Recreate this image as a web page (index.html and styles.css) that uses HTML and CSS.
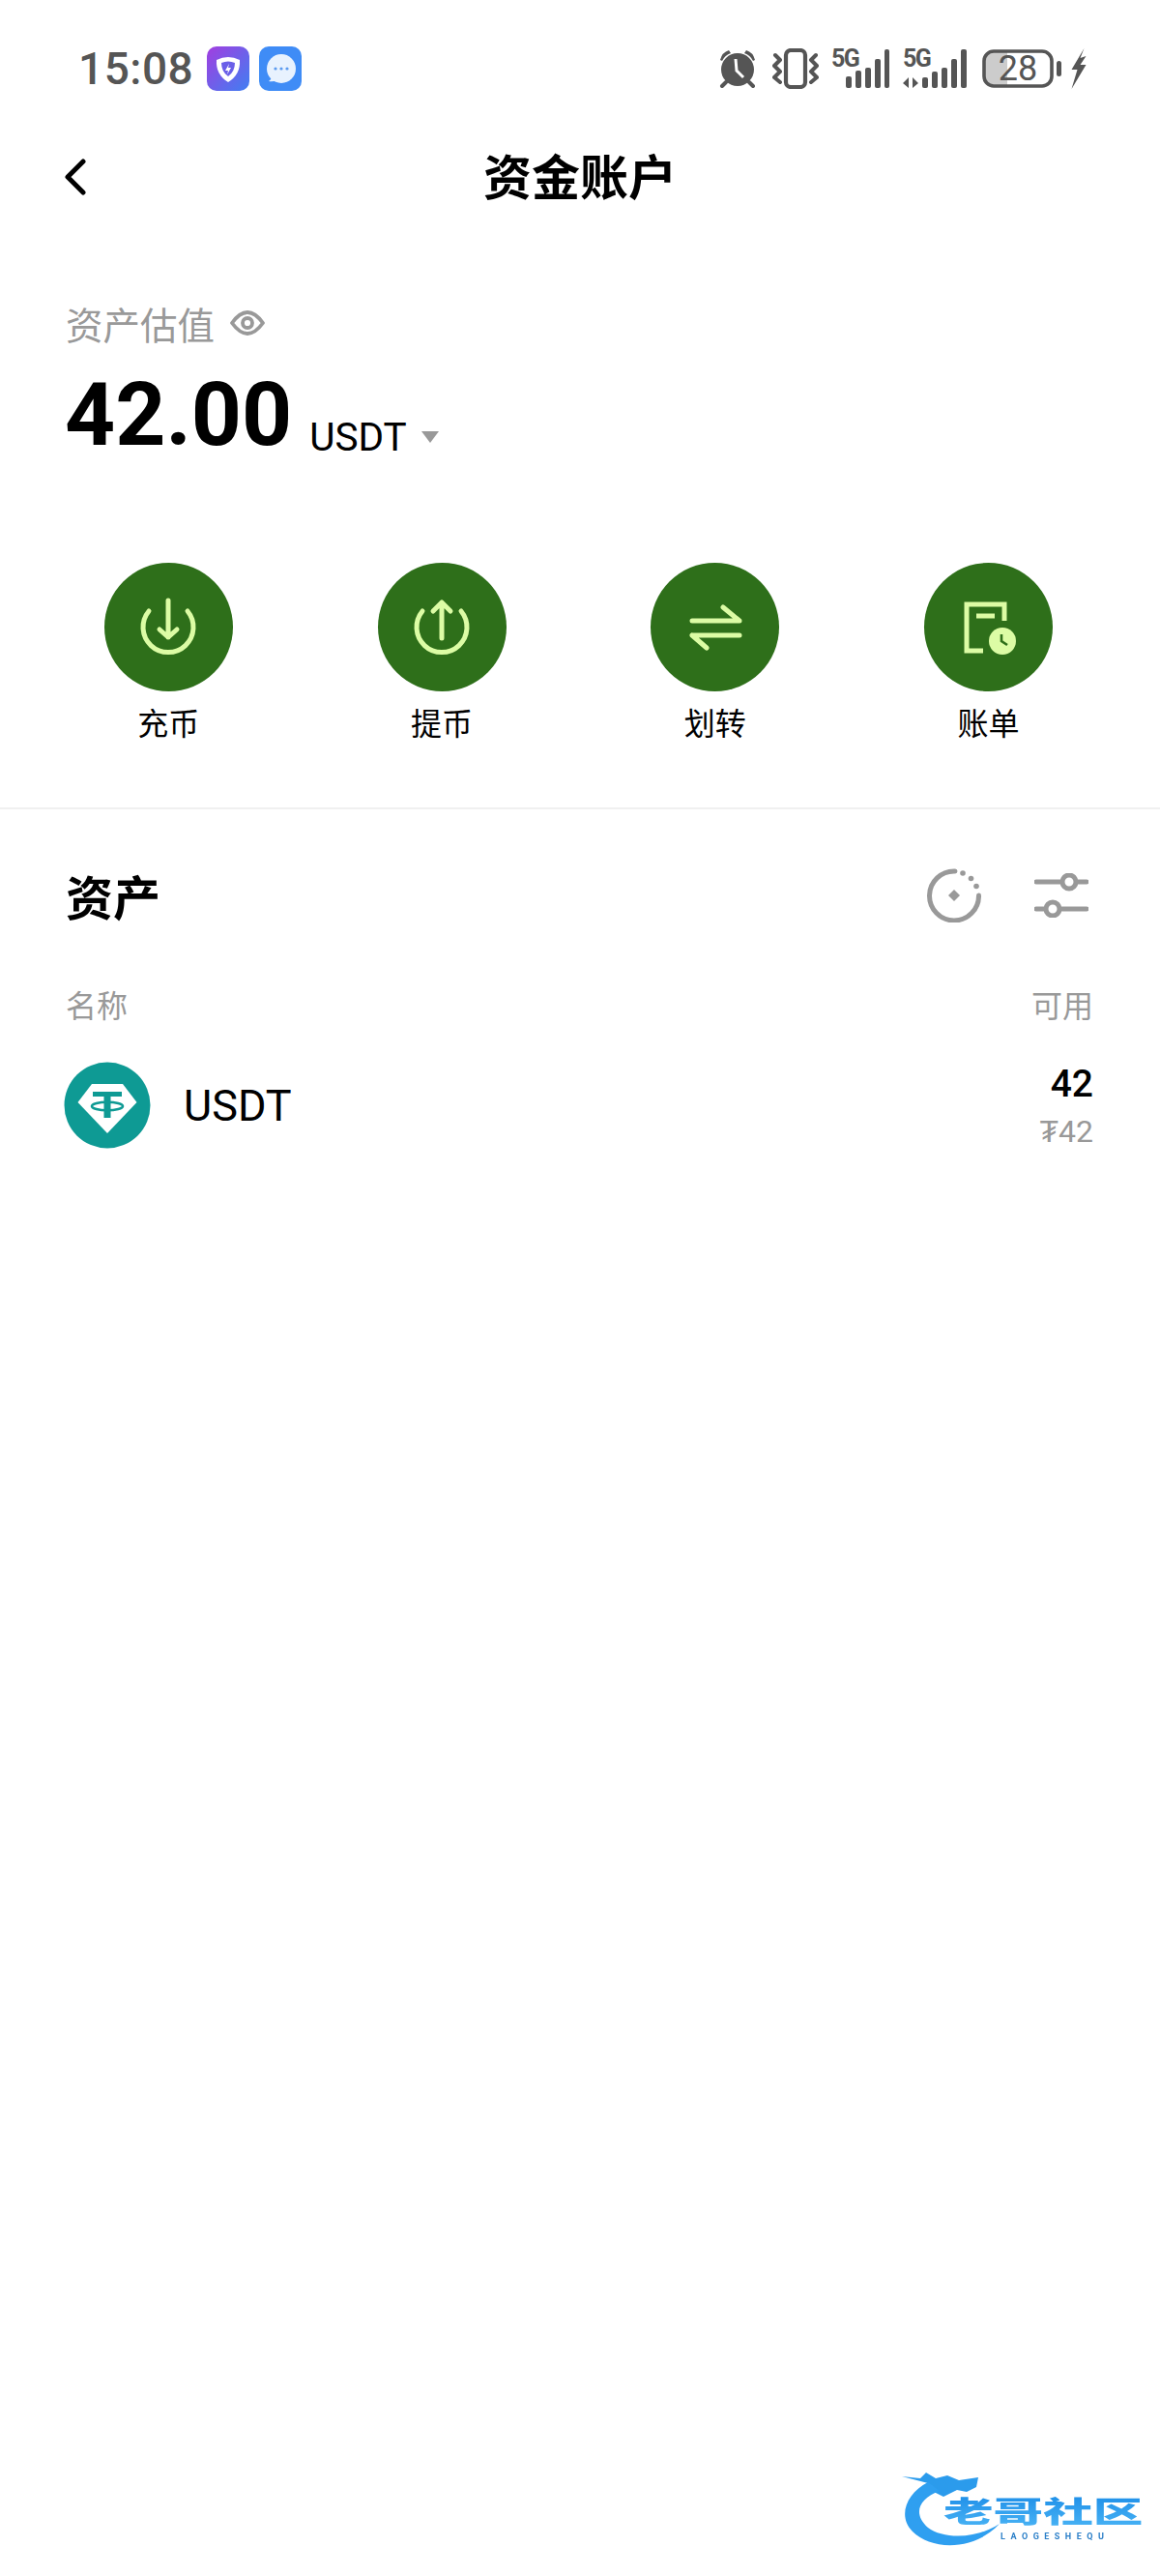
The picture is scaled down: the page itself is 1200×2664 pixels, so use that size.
FILE: index.html
```html
<!DOCTYPE html>
<html lang="zh-CN">
<head>
    <meta charset="UTF-8">
    <meta name="viewport" content="width=device-width, initial-scale=1.0">
    <title>资金账户</title>
    <link rel="stylesheet" href="styles.css">
</head>
<body>
    <div class="page">
        <div class="status-bar">
            <div class="status-left">
                <span class="status-time">15:08</span>
                <svg class="app-icon" viewBox="0 0 44 46">
                    <defs>
                        <linearGradient id="shieldBg" x1="0" y1="0" x2="1" y2="1">
                            <stop offset="0" stop-color="#a23ee0"/>
                            <stop offset="1" stop-color="#3f7ff2"/>
                        </linearGradient>
                    </defs>
                    <rect width="44" height="46" rx="10" fill="url(#shieldBg)"/>
                    <path d="M10 14 Q22 8 34 14 Q35 29 22 37 Q9 29 10 14Z" fill="#fff"/>
                    <path d="M15 17 Q22 14 29 17 Q29 26 22 31 Q15 26 15 17Z" fill="#6a5fe8"/>
                    <path d="M23 18 L19 25 L22 25 L21 29 L25 22 L22 22Z" fill="#fff"/>
                </svg>
                <svg class="app-icon" viewBox="0 0 44 46">
                    <rect width="44" height="46" rx="10" fill="#3f8cf6"/>
                    <circle cx="23" cy="23" r="15" fill="#e8f2fe"/>
                    <path d="M10 36 Q14 33 13 29 L19 35 Q14 37 10 36Z" fill="#e8f2fe"/>
                    <circle cx="17" cy="23" r="1.6" fill="#5b9bf0"/>
                    <circle cx="23" cy="23" r="1.6" fill="#5b9bf0"/>
                    <circle cx="29" cy="23" r="1.6" fill="#5b9bf0"/>
                </svg>
            </div>
            <div class="status-right">
                <svg class="st-alarm" viewBox="0 0 40 40">
                    <circle cx="20" cy="21" r="17" fill="#555"/>
                    <path d="M2 11 Q4 3 11 1 L13 4 Q7 6 4 12Z M38 11 Q36 3 29 1 L27 4 Q33 6 36 12Z" fill="#555"/>
                    <path d="M8 34 L4 38 M32 34 L36 38" stroke="#555" stroke-width="4" stroke-linecap="round"/>
                    <path d="M18 10 L19 22 L26 29" fill="none" stroke="#fff" stroke-width="3"/>
                </svg>
                <svg class="st-vibrate" viewBox="0 0 48 42">
                    <rect x="14" y="2" width="20" height="38" rx="5" fill="none" stroke="#555" stroke-width="4.200"/>
                    <path d="M3 7 L8 12 L2 18 L8 24 L2 30 L8 35 M45 7 L40 12 L46 18 L40 24 L46 30 L40 35" fill="none" stroke="#555" stroke-width="4" stroke-linejoin="round" stroke-linecap="round"/>
                </svg>
                <svg class="st-signal" viewBox="0 -10 60 51">
                    <text class="st-5g" x="0" y="18">5G</text>
                    <rect x="15" y="28" width="6" height="12" rx="2" fill="#555"/>
                    <rect x="25" y="22" width="6" height="18" rx="2" fill="#555"/>
                    <rect x="35" y="19" width="6" height="21" rx="2" fill="#555"/>
                    <rect x="45" y="10" width="6" height="30" rx="2" fill="#555"/>
                    <rect x="55" y="0" width="5" height="40" rx="2" fill="#555"/>
                </svg>
                <svg class="st-signal-b" viewBox="0 -10 66 51">
                    <text class="st-5g" x="0" y="18">5G</text>
                    <path d="M0 35 L6 29 L6 40Z M16 35 L10 29 L10 40Z" fill="#555"/>
                    <rect x="20" y="29" width="6" height="11" rx="2" fill="#555"/>
                    <rect x="30" y="23" width="6" height="17" rx="2" fill="#555"/>
                    <rect x="40" y="19" width="6" height="21" rx="2" fill="#555"/>
                    <rect x="50" y="10" width="6" height="30" rx="2" fill="#555"/>
                    <rect x="60" y="0" width="6" height="40" rx="2" fill="#555"/>
                </svg>
                <svg class="st-battery" viewBox="0 0 82 40">
                    <path d="M12 2 H26 V38 H12 Q2 38 2 28 V12 Q2 2 12 2Z" fill="#ccc"/>
                    <rect x="2" y="2" width="70" height="36" rx="10" fill="none" stroke="#555" stroke-width="3.6"/>
                    <text class="st-level" x="37" y="32">28</text>
                    <rect x="77" y="12" width="5" height="16" rx="2.5" fill="#555"/>
                </svg>
                <svg class="st-bolt" viewBox="0 0 17 42">
                    <path d="M14 0 L1 22 L7 22 L1 42 L16 17 L10 17 L16 8 L10 10Z" fill="#555"/>
                </svg>
            </div>
        </div>

        <div class="top-bar">
            <div class="top-bar-side">
                <svg class="back-icon" viewBox="0 0 24 38">
                    <path d="M20 3 L4 19 L20 35" fill="none" stroke="#000" stroke-width="5" stroke-linecap="round" stroke-linejoin="round"/>
                </svg>
            </div>
            <h1 class="page-title">资金账户</h1>
            <div class="top-bar-side"></div>
        </div>

        <div class="summary">
            <div class="summary-label">
                <span>资产估值</span>
                <svg class="eye-icon" viewBox="0 0 36 26">
                    <path d="M2 13 Q10 2 18 2 Q26 2 34 13 Q26 24 18 24 Q10 24 2 13Z" fill="none" stroke="#999" stroke-width="3.8" stroke-linejoin="round"/>
                    <circle cx="18" cy="13" r="5" fill="none" stroke="#999" stroke-width="3.8"/>
                </svg>
            </div>
            <div class="summary-amount">
                <span class="amount">42.00</span>
                <span class="amount-unit">USDT</span>
                <span class="amount-caret"></span>
            </div>
        </div>

        <div class="actions">
            <div class="action">
                <div class="action-circle">
                    <svg viewBox="0 0 80 80">
                        <path d="M20 23 A26 26 0 1 0 60 23 M40 12 V50 M31 42 L40 50 L49 42" class="action-line"/>
                    </svg>
                </div>
                <span class="action-label">充币</span>
            </div>
            <div class="action">
                <div class="action-circle">
                    <svg viewBox="0 0 80 80">
                        <path d="M20 23 A26 26 0 1 0 60 23 M40 51 V14 M31 23 L40 14 L49 23" class="action-line"/>
                    </svg>
                </div>
                <span class="action-label">提币</span>
            </div>
            <div class="action">
                <div class="action-circle">
                    <svg viewBox="0 0 80 80">
                        <path d="M16 33 H65 L48 19 M16 48 H65 M16 48 L31 61" class="action-line"/>
                    </svg>
                </div>
                <span class="action-label">划转</span>
            </div>
            <div class="action">
                <div class="action-circle">
                    <svg viewBox="0 0 80 80">
                        <path d="M56 33 V16 H17 V64 H34 M27 28 H46" class="action-line action-line-square"/>
                        <circle cx="54" cy="54" r="14" fill="#dcfca5"/>
                        <path d="M53 47 V54 L59 58" fill="none" stroke="#2e6f1a" stroke-width="2.6"/>
                    </svg>
                </div>
                <span class="action-label">账单</span>
            </div>
        </div>

        <div class="assets">
            <div class="assets-head">
                <h2 class="assets-title">资产</h2>
                <div class="assets-tools">
                    <svg class="tool-icon" viewBox="0 0 56 56">
                        <path d="M29 3 A25.5 25.5 0 1 0 53.500 28" fill="none" stroke="#999" stroke-width="5" stroke-linecap="round"/>
                        <circle cx="37" cy="5" r="2.800" fill="#999"/>
                        <circle cx="45.500" cy="10.500" r="2.800" fill="#999"/>
                        <circle cx="51" cy="18.500" r="2.800" fill="#999"/>
                        <path d="M28 22 L34 28 L28 34 L22 28Z" fill="#999"/>
                    </svg>
                    <svg class="tool-icon" viewBox="0 0 56 46">
                        <path d="M2 9 H54 M2 37 H54" stroke="#999" stroke-width="5" stroke-linecap="round"/>
                        <circle cx="36" cy="9" r="7" fill="#fff" stroke="#999" stroke-width="5"/>
                        <circle cx="19" cy="37" r="7" fill="#fff" stroke="#999" stroke-width="5"/>
                    </svg>
                </div>
            </div>
            <div class="assets-cols">
                <span>名称</span>
                <span>可用</span>
            </div>
            <div class="asset-row">
                <svg class="coin-icon" viewBox="0 0 90 90">
                    <circle cx="45" cy="45" r="44.500" fill="#0e9a94"/>
                    <path d="M29 23 H61 L75.500 42 L45 74 L14.500 42Z" fill="#fff"/>
                    <path d="M30 31 H60 V36 H48.500 V58 H41.500 V36 H30Z" fill="#0e9a94"/>
                    <ellipse cx="45" cy="46" rx="16" ry="4.200" fill="none" stroke="#0e9a94" stroke-width="2.600"/>
                </svg>
                <span class="asset-name">USDT</span>
                <div class="asset-values">
                    <div class="asset-amount">42</div>
                    <div class="asset-fiat">₮42</div>
                </div>
            </div>
        </div>

        <svg class="watermark" viewBox="0 0 300 134">
            <defs>
                <linearGradient id="markBlue" x1="0" y1="0" x2="0" y2="1">
                    <stop offset="0" stop-color="#1f8fe8"/>
                    <stop offset="1" stop-color="#4ab4f5"/>
                </linearGradient>
            </defs>
            <path d="M33 31 L52 33 L58 27 L68 33 L80 30 L92 35 L112 32 L110 42 L100 47 L90 45 L76 52 L66 47 L60 38Z" fill="#2b9bec"/>
            <path d="M60 37 C38 48 28 72 44 88 C64 108 108 108 134 80 C110 96 76 96 60 84 C44 70 50 54 72 46Z" fill="#2f9ff0"/>
            <text class="mark-title" transform="translate(76 78) scale(1.720 1)" fill="url(#markBlue)">老哥社区</text>
            <text class="mark-sub" x="135" y="96">LAOGESHEQU</text>
        </svg>
    </div>
</body>
</html>
```

FILE: styles.css
```css
* {
    box-sizing: border-box;
}
body {
    margin: 0;
    background-color: #fff;
    font-family: Roboto, "Noto Sans CJK SC", sans-serif;
    color: #000;
}
.page {
    position: relative;
    width: 1200px;
    height: 2664px;
    overflow: hidden;
}
.status-bar {
    height: 142px;
    display: flex;
    align-items: center;
    justify-content: space-between;
    padding: 0 74px 0 81px;
}
.status-left {
    display: flex;
    align-items: center;
}
.status-time {
    font-size: 46px;
    font-weight: 500;
    color: #555;
    width: 133px;
    letter-spacing: 0.5px;
}
.app-icon {
    width: 44px;
    height: 46px;
    margin-right: 10px;
}
.status-right {
    display: flex;
    align-items: center;
}
.st-alarm {
    width: 40px;
    height: 40px;
    margin-right: 16px;
}
.st-vibrate {
    width: 48px;
    height: 42px;
    margin-right: 13px;
}
.st-signal {
    width: 60px;
    height: 51px;
    margin-top: -10px;
    margin-right: 14px;
}
.st-signal-b {
    width: 66px;
    height: 51px;
    margin-top: -10px;
    margin-right: 16px;
}
.st-battery {
    width: 82px;
    height: 40px;
    margin-right: 8px;
}
.st-bolt {
    width: 20px;
    height: 42px;
}
.st-5g {
    font-size: 25px;
    font-weight: 700;
    fill: #555;
    letter-spacing: -1.5px;
}
.st-level {
    font-size: 36px;
    font-weight: 400;
    fill: #555;
    text-anchor: middle;
}
.top-bar {
    height: 82px;
    display: grid;
    grid-template-columns: 1fr auto 1fr;
    align-items: center;
    padding: 0 68px;
}
.top-bar-side {
    display: flex;
    align-items: center;
}
.back-icon {
    width: 24px;
    height: 38px;
    margin-left: -2px;
}
.page-title {
    margin: 3px 0 0;
    font-size: 50px;
    font-weight: 700;
    line-height: 60px;
}
.summary {
    padding: 85px 68px 0;
}
.summary-label {
    display: flex;
    align-items: center;
    height: 50px;
    font-size: 38.500px;
    color: #999;
}
.eye-icon {
    width: 36px;
    height: 26px;
    margin-left: 16px;
}
.summary-amount {
    display: flex;
    align-items: baseline;
    height: 110px;
    line-height: 110px;
    margin-top: 15px;
    margin-left: -1px;
}
.amount {
    font-size: 91px;
    font-weight: 700;
}
.amount-unit {
    font-size: 40.500px;
    margin-left: 18px;
    transform: translateY(6px);
}
.amount-caret {
    width: 0;
    height: 0;
    margin-left: 15px;
    border-left: 9px solid transparent;
    border-right: 9px solid transparent;
    border-top: 12px solid #999;
    transform: translateY(-2px);
}
.actions {
    display: grid;
    grid-template-columns: repeat(4, 1fr);
    margin-top: 98px;
    padding: 0 36px 0 33px;
    height: 253px;
}
.action {
    display: flex;
    flex-direction: column;
    align-items: center;
}
.action-circle {
    width: 133px;
    height: 133px;
    border-radius: 50%;
    background-color: #2e6f1a;
    display: flex;
    align-items: center;
    justify-content: center;
}
.action-circle svg {
    width: 80px;
    height: 80px;
}
.action-line {
    fill: none;
    stroke: #dcfca5;
    stroke-width: 5;
    stroke-linecap: round;
    stroke-linejoin: round;
}
.action-line-square {
    stroke-linecap: butt;
    stroke-linejoin: miter;
}
.action-label {
    margin-top: 13px;
    font-size: 32px;
    line-height: 42px;
}
.assets {
    border-top: 2px solid #f0f0f0;
    padding: 0 69px 0 68px;
}
.assets-head {
    display: flex;
    align-items: center;
    justify-content: space-between;
    height: 183px;
    padding-bottom: 6px;
}
.assets-title {
    margin: 0;
    font-size: 49px;
    font-weight: 700;
}
.assets-tools {
    display: flex;
    align-items: center;
    gap: 55px;
    margin-right: 5px;
}
.tool-icon {
    width: 56px;
    height: auto;
}
.assets-cols {
    display: flex;
    justify-content: space-between;
    font-size: 32px;
    line-height: 42px;
    color: #999;
}
.asset-row {
    display: flex;
    align-items: center;
    margin-top: 32px;
}
.coin-icon {
    width: 90px;
    height: 90px;
    margin-left: -2px;
}
.asset-name {
    margin-left: 34px;
    font-size: 45px;
}
.asset-values {
    margin-left: auto;
    padding-top: 4px;
    text-align: right;
}
.asset-amount {
    font-size: 39px;
    font-weight: 500;
    line-height: 46px;
}
.asset-fiat {
    margin-top: 4px;
    font-size: 32px;
    line-height: 44px;
    color: #999;
}
.watermark {
    position: absolute;
    right: 0;
    bottom: 0;
    width: 300px;
    height: 134px;
    filter: blur(0.7px);
}
.mark-title {
    font-size: 30px;
    font-weight: 900;
}
.mark-sub {
    font-size: 9px;
    letter-spacing: 5.500px;
    font-weight: 700;
    fill: #2b7fc8;
}
```
